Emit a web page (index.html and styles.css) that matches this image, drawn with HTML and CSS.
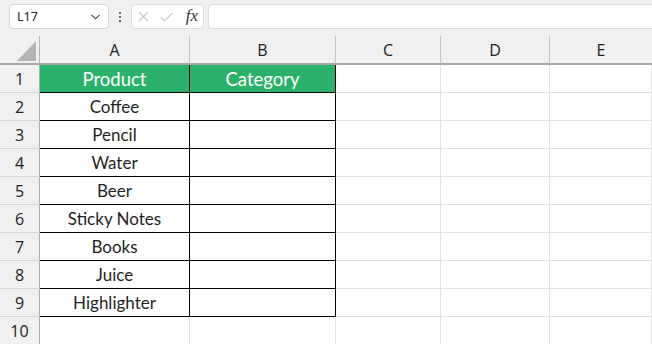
FILE: index.html
```html
<!DOCTYPE html>
<html>
<head>
<meta charset="utf-8">
<link rel="stylesheet" href="styles.css">
</head>
<body>
<div class="topbar">
  <div class="namebox">
    <span class="ref">L17</span>
    <svg class="chev" width="9" height="6" viewBox="0 0 9 6"><path d="M0.5 0.8 L4.5 4.8 L8.5 0.8" fill="none" stroke="#444" stroke-width="1.1"/></svg>
  </div>
  <div class="dots"><span></span><span></span><span></span></div>
  <div class="fxbox">
    <svg class="ico" width="11" height="11" viewBox="0 0 11 11"><path d="M1 1 L10 10 M10 1 L1 10" stroke="#c4c4c4" stroke-width="1.1" fill="none"/></svg>
    <svg class="ico" width="13" height="10" viewBox="0 0 13 10"><path d="M0.8 5 L4.6 8.8 L12.4 1" stroke="#c4c4c4" stroke-width="1.1" fill="none"/></svg>
    <span class="fx">fx</span>
  </div>
  <div class="formula"></div>
</div>
<div class="sheet">
  <div class="corner"><div class="tri"></div></div>
  <div class="ch">A</div><div class="ch">B</div><div class="ch">C</div><div class="ch">D</div><div class="ch last">E</div>

  <div class="rh">1</div><div class="c hd tb">Product</div><div class="c hd tb">Category</div><div class="c"></div><div class="c"></div><div class="c"></div>
  <div class="rh">2</div><div class="c tb">Coffee</div><div class="c tb"></div><div class="c"></div><div class="c"></div><div class="c"></div>
  <div class="rh">3</div><div class="c tb">Pencil</div><div class="c tb"></div><div class="c"></div><div class="c"></div><div class="c"></div>
  <div class="rh">4</div><div class="c tb">Water</div><div class="c tb"></div><div class="c"></div><div class="c"></div><div class="c"></div>
  <div class="rh">5</div><div class="c tb">Beer</div><div class="c tb"></div><div class="c"></div><div class="c"></div><div class="c"></div>
  <div class="rh">6</div><div class="c tb">Sticky Notes</div><div class="c tb"></div><div class="c"></div><div class="c"></div><div class="c"></div>
  <div class="rh">7</div><div class="c tb">Books</div><div class="c tb"></div><div class="c"></div><div class="c"></div><div class="c"></div>
  <div class="rh">8</div><div class="c tb">Juice</div><div class="c tb"></div><div class="c"></div><div class="c"></div><div class="c"></div>
  <div class="rh">9</div><div class="c tb">Highlighter</div><div class="c tb"></div><div class="c"></div><div class="c"></div><div class="c"></div>
  <div class="rh">10</div><div class="c"></div><div class="c"></div><div class="c"></div><div class="c"></div><div class="c"></div>
</div>
</body>
</html>
```
FILE: styles.css
```css
html, body {
  margin: 0;
  padding: 0;
  background: #ffffff;
  overflow: hidden;
}
body {
  width: 652px;
  height: 344px;
  font-family: "Open Sans", "Noto Sans", sans-serif;
}
.topbar {
  height: 36px;
  background: #f0f0f0;
  display: flex;
  align-items: flex-start;
  padding: 4px 0 0 9px;
  box-sizing: border-box;
}
.namebox {
  width: 100px;
  height: 25px;
  box-sizing: border-box;
  background: #fff;
  border: 1px solid #d6d6d6;
  border-radius: 4px;
  display: flex;
  align-items: center;
  justify-content: space-between;
  padding: 0 8px 0 7px;
  font-size: 12px;
  color: #222;
}
.ref { font-family: "Noto Sans", sans-serif; font-size: 12.5px; }
.chev { margin-top: 1px; }
.dots {
  width: 22px;
  height: 25px;
  display: flex;
  flex-direction: column;
  align-items: center;
  justify-content: center;
  gap: 2px;
}
.dots span {
  width: 2px;
  height: 2px;
  background: #333;
  border-radius: 1px;
}
.fxbox {
  width: 73px;
  height: 25px;
  box-sizing: border-box;
  background: #fff;
  border: 1px solid #dcdcdc;
  border-radius: 4px;
  display: flex;
  align-items: center;
  padding: 0 5px 0 6px;
  gap: 11px;
}
.fx {
  font-family: "Liberation Serif", serif;
  font-style: italic;
  font-size: 17px;
  color: #333;
  margin-left: auto;
  margin-top: -2px;
}
.formula {
  margin-left: 4px;
  flex: 1;
  height: 25px;
  background: #fff;
  border: 1px solid #dcdcdc;
  border-right: none;
  border-radius: 4px 0 0 4px;
  box-sizing: border-box;
}
.sheet {
  display: grid;
  grid-template-columns: 40px 150px 146px 105px 109px 1fr;
  grid-template-rows: 29px repeat(10, 28px);
}
.corner, .ch {
  background: #f0f0f0;
  border-bottom: 2px solid #a9a9a9;
  box-sizing: border-box;
}
.corner {
  border-right: 1px solid #b6b6b6;
  position: relative;
}
.tri {
  position: absolute;
  left: 17px;
  top: 5px;
  width: 0;
  height: 0;
  border-left: 19px solid transparent;
  border-bottom: 20px solid #b4b4b4;
}
.ch {
  border-right: 1px solid #c4c4c4;
  display: flex;
  align-items: center;
  justify-content: center;
  font-size: 16px;
  color: #222;
  padding-top: 1px;
}
.ch.last { border-right: none; }
.rh {
  background: #f0f0f0;
  border-right: 1px solid #ababab;
  border-bottom: 1px solid #d4d4d4;
  box-sizing: border-box;
  display: flex;
  align-items: center;
  justify-content: center;
  font-size: 16px;
  color: #222;
}
.c {
  border-right: 1px solid #e1e1e1;
  border-bottom: 1px solid #e1e1e1;
  box-sizing: border-box;
  display: flex;
  align-items: center;
  justify-content: center;
  font-family: "Lato", sans-serif;
  font-size: 17px;
  color: #1f1f1f;
}
.c.tb {
  border-right-color: #000;
  border-bottom-color: #000;
}
.c.hd {
  background: #2bb16a;
  color: #fff;
  font-size: 18.5px;
}
```
